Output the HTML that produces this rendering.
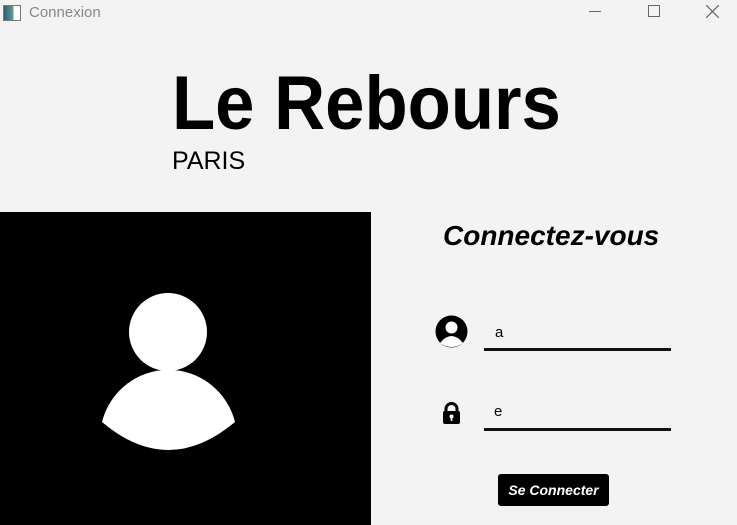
<!DOCTYPE html>
<html><head><meta charset="utf-8"><style>
body{margin:0;width:737px;height:525px;background:#f3f3f3;position:relative;overflow:hidden;font-family:"Liberation Sans",sans-serif}
.a{position:absolute}
</style></head><body>
<div class="a" style="left:3px;top:5px;width:16px;height:14px;border:1px solid #777;background:linear-gradient(90deg,#2b5f7a,#6aa08a 60%,#fff 60%)"></div>
<div class="a" style="left:29px;top:4px;font-size:15px;color:#888">Connexion</div>
<div class="a" style="left:589px;top:11px;width:12px;height:1px;background:#666"></div>
<div class="a" style="left:648px;top:5px;width:10px;height:10px;border:1px solid #666"></div>
<svg class="a" style="left:706px;top:5px" width="13" height="13"><path d="M0,0L13,13M13,0L0,13" stroke="#666" stroke-width="1.2"/></svg>

<div class="a" style="left:172px;top:54px;font-size:76px;font-weight:bold;line-height:100px;transform:scaleX(0.93);transform-origin:left top;color:#000;white-space:nowrap">Le Rebours</div>
<div class="a" style="left:172px;top:146px;font-size:25px;line-height:30px;color:#000">PARIS</div>

<div class="a" style="left:0;top:212px;width:371px;height:313px;background:#000"></div>
<svg class="a" style="left:0;top:212px" width="371" height="313">
<circle cx="168" cy="120" r="39" fill="#fff"/>
<path d="M102,210 A68.5,68.5 0 0 1 235,210 Q168,266 102,210Z" fill="#fff"/>
</svg>

<div class="a" style="left:443px;top:219px;font-size:28px;font-weight:bold;font-style:italic;line-height:34px">Connectez-vous</div>

<svg class="a" style="left:435px;top:315px" width="33" height="33">
<circle cx="16.5" cy="16.5" r="16" fill="#000"/>
<circle cx="16.5" cy="12.5" r="6" fill="#fff"/>
<path d="M5,28 Q16.5,14 28,28 Q16.5,36 5,28Z" fill="#fff"/>
</svg>
<div class="a" style="left:495px;top:324px;font-size:15px">a</div>
<div class="a" style="left:484px;top:348px;width:187px;height:3px;background:#111"></div>

<svg class="a" style="left:442px;top:402px" width="19" height="22">
<path d="M4,10V7a5.5,5.5 0 0 1 11,0V10" fill="none" stroke="#000" stroke-width="3"/>
<rect x="1" y="9" width="17" height="13" rx="2" fill="#000"/>
<circle cx="9.5" cy="14.5" r="2" fill="#fff"/><rect x="8.7" y="15" width="1.6" height="4" fill="#fff"/>
</svg>
<div class="a" style="left:494px;top:403px;font-size:15px">e</div>
<div class="a" style="left:484px;top:428px;width:187px;height:3px;background:#111"></div>

<div class="a" style="left:498px;top:474px;width:111px;height:32px;background:#000;border-radius:3px;color:#fff;font-weight:bold;font-style:italic;font-size:14px;line-height:32px;text-align:center">Se Connecter</div>
</body></html>
